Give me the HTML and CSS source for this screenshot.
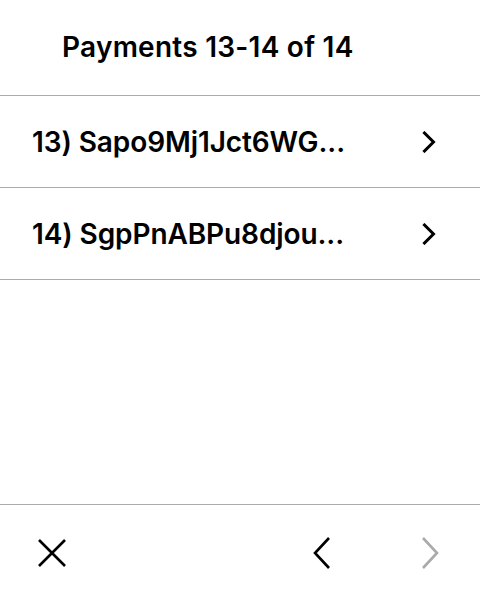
FILE: index.html
```html
<!DOCTYPE html>
<html>
<head>
<meta charset="utf-8">
<link rel="stylesheet" href="styles.css">
</head>
<body>
<div class="screen">
  <header class="header">
    <h1 class="title">Payments 13-14 of 14</h1>
  </header>
  <ul class="list">
    <li class="row">
      <span class="row-label">13) Sapo9Mj1Jct6WG...</span>
      <svg class="row-chevron" width="14" height="22" viewBox="0 0 14 22"><path d="M2.5 2 L11.5 11 L2.5 20" fill="none" stroke="#000" stroke-width="3" stroke-linecap="square"/></svg>
    </li>
    <li class="row">
      <span class="row-label">14) SgpPnABPu8djou...</span>
      <svg class="row-chevron" width="14" height="22" viewBox="0 0 14 22"><path d="M2.5 2 L11.5 11 L2.5 20" fill="none" stroke="#000" stroke-width="3" stroke-linecap="square"/></svg>
    </li>
  </ul>
  <div class="spacer"></div>
  <footer class="footer">
    <svg class="icon-close" width="30" height="30" viewBox="0 0 30 30"><path d="M2 2 L28 28 M28 2 L2 28" fill="none" stroke="#000" stroke-width="2.6"/></svg>
    <div class="nav">
      <svg class="icon-prev" width="20" height="34" viewBox="0 0 20 34"><path d="M17 2 L3 17 L17 32" fill="none" stroke="#000" stroke-width="2.6"/></svg>
      <svg class="icon-next" width="20" height="34" viewBox="0 0 20 34"><path d="M3 2 L17 17 L3 32" fill="none" stroke="#aaaaaa" stroke-width="2.6"/></svg>
    </div>
  </footer>
</div>
</body>
</html>
```
FILE: styles.css
```css
html, body {
  margin: 0;
  padding: 0;
  background: #fff;
}
body {
  font-family: Inter, "Noto Sans", sans-serif;
  color: #000;
}
.screen {
  width: 480px;
  height: 600px;
  display: flex;
  flex-direction: column;
}
.header {
  height: 95px;
  border-bottom: 1px solid #ababab;
  display: flex;
  align-items: center;
  padding-left: 62px;
  box-sizing: content-box;
}
.title {
  margin: 0;
  font-size: 28px;
  font-weight: 600;
  line-height: 1;
  letter-spacing: 0.25px;
  margin-top: -1px;
}
.list {
  list-style: none;
  margin: 0;
  padding: 0;
}
.row {
  height: 91px;
  border-bottom: 1px solid #ababab;
  display: flex;
  align-items: center;
  justify-content: space-between;
  padding: 0 44px 0 32px;
}
.row-label {
  font-size: 28px;
  font-weight: 600;
  line-height: 1;
  letter-spacing: -0.1px;
}
.row-chevron {
  display: block;
}
.spacer {
  flex: 1;
}
.footer {
  height: 95px;
  border-top: 1px solid #ababab;
  display: flex;
  align-items: center;
  justify-content: space-between;
  padding: 0 40px 0 37px;
}
.icon-close {
  display: block;
}
.nav {
  display: flex;
  align-items: center;
  gap: 88px;
}
.nav svg {
  display: block;
}
```
